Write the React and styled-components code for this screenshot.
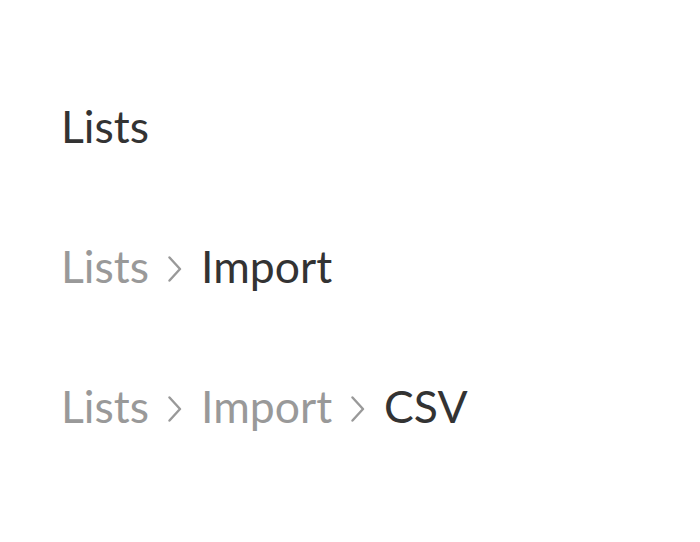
import React from "react";
import styled, { createGlobalStyle } from "styled-components";

const Global = createGlobalStyle`
  html, body { margin: 0; padding: 0; background: #fff; }
  body { font-family: Lato, "Noto Sans", sans-serif; }
`;

const Page = styled.div`
  display: flex;
  flex-direction: column;
  gap: 84px;
  padding: 98px 0 0 61px;
`;

const Trail = styled.nav`
  display: flex;
  align-items: center;
  gap: 19px;
  height: 56px;
  font-size: 44.5px;
  line-height: 56px;
`;

const Crumb = styled.span`
  color: ${(p) => (p.$current ? "#333333" : "#999999")};
`;

const Sep = styled.svg`
  width: 14px;
  height: 26px;
  margin-top: 6px;
  flex: none;
`;

const Chevron = () => (
  <Sep viewBox="0 0 14 26">
    <path d="M1.5 1.5 L12 13 L1.5 24.5" fill="none" stroke="#999" strokeWidth="2.4" strokeLinecap="round" strokeLinejoin="round" />
  </Sep>
);

const Breadcrumb = ({ items }) => (
  <Trail>
    {items.map((it, i) => (
      <React.Fragment key={it}>
        {i > 0 && <Chevron />}
        <Crumb $current={i === items.length - 1}>{it}</Crumb>
      </React.Fragment>
    ))}
  </Trail>
);

export default function App() {
  return (
    <>
      <Global />
      <Page>
        <Breadcrumb items={["Lists"]} />
        <Breadcrumb items={["Lists", "Import"]} />
        <Breadcrumb items={["Lists", "Import", "CSV"]} />
      </Page>
    </>
  );
}
